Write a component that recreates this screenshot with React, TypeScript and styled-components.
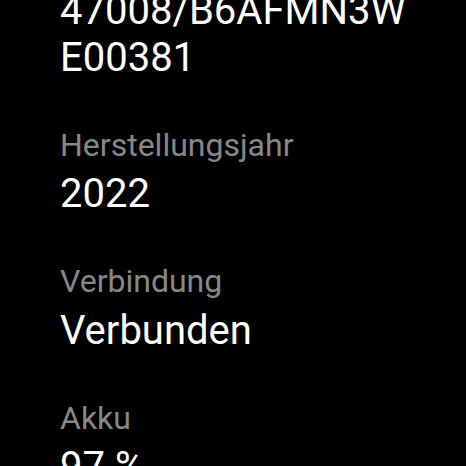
import styled, { createGlobalStyle } from 'styled-components';

const GlobalStyle = createGlobalStyle`
    html, body {
        margin: 0;
        padding: 0;
        background: #000;
        overflow: hidden;
    }
    body {
        width: 466px;
        height: 466px;
        font-family: Roboto, "Noto Sans", sans-serif;
        -webkit-font-smoothing: antialiased;
    }
`

const Screen = styled.div`
    width: 466px;
    height: 466px;
    overflow: hidden;
    background: #000;
`

// scrolled list, first label sits above the visible area
const InfoList = styled.div`
    display: flex;
    flex-direction: column;
    gap: 46px;
    padding: 0 48px 0 60px;
    margin-top: -57px;
`

const InfoItem = styled.div`
    display: flex;
    flex-direction: column;
    gap: 6px;
`

const Label = styled.div`
    font-size: 32px;
    line-height: 37.5px;
    color: #878787;
`

const Value = styled.div`
    font-size: 40px;
    line-height: 47px;
    color: #fff;
    word-break: break-all;
`

const items = [
    { label: 'Seriennummer', value: '47008/B6AFMN3WE00381' },
    { label: 'Herstellungsjahr', value: '2022' },
    { label: 'Verbindung', value: 'Verbunden' },
    { label: 'Akku', value: '97 %' },
]

export default function App() {
    return (
        <Screen>
            <GlobalStyle />
            <InfoList>
                {items.map((item) => (
                    <InfoItem key={item.label}>
                        <Label>{item.label}</Label>
                        <Value>{item.value}</Value>
                    </InfoItem>
                ))}
            </InfoList>
        </Screen>
    )
}
